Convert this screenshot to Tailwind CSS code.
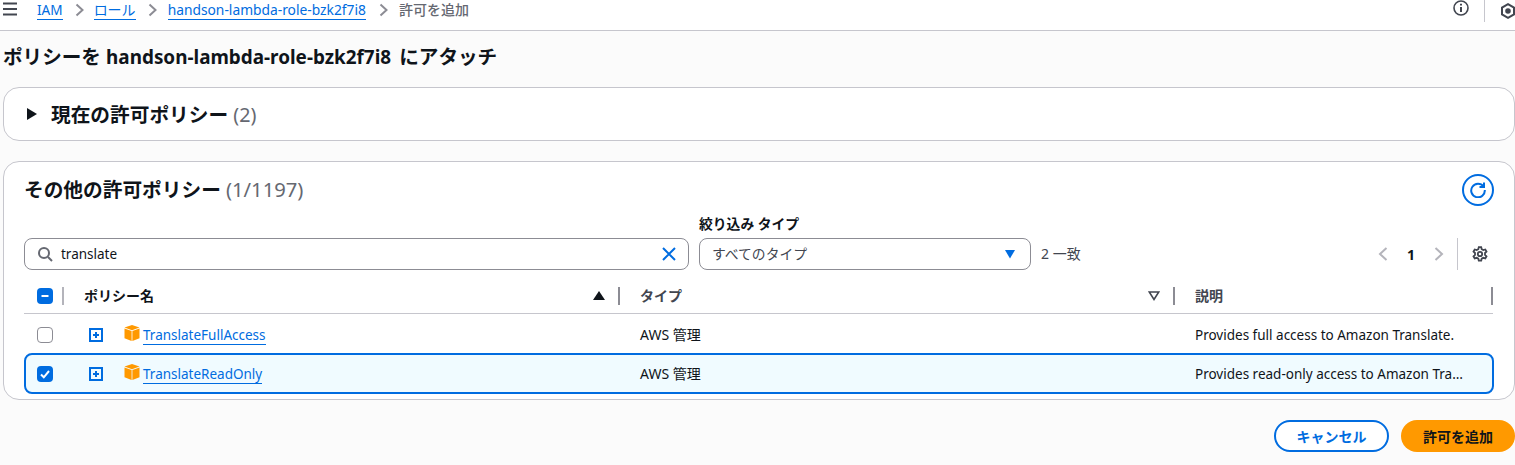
<!DOCTYPE html>
<html lang="ja">
<head>
  <meta charset="UTF-8">
  <title>許可を追加</title>
  <script src="https://cdn.jsdelivr.net/npm/@tailwindcss/browser@4"></script>
</head>
<body class="bg-[#fbfbfb] text-[#0f141a] font-['Noto_Sans','Noto_Sans_CJK_JP',sans-serif] w-[1515px] h-[465px] overflow-hidden">
  <!-- top bar -->
  <div class="h-[31px] bg-white border-b border-[#c6c6cd] flex items-start">
    <svg class="w-4 h-4 ml-[2px] mt-[1px]" viewBox="0 0 16 16" fill="none" stroke="#424650" stroke-width="2"><path d="M1 2.500h14M1 8h14M1 13.500h14"/></svg>
    <nav class="flex items-center ml-[19px] text-[14px] leading-[20px] h-[20px]">
      <a class="text-[#006ce0] border-b border-[#006ce0] leading-[18px] text-[13.600px]">IAM</a>
      <svg class="w-4 h-4 ml-[9px] mr-[6px]" viewBox="0 0 16 16" fill="none" stroke="#8c8c94" stroke-width="2"><path d="M4.500 2.500l6 5.500-6 5.500"/></svg>
      <a class="text-[#006ce0] border-b border-[#006ce0] leading-[18px]">ロール</a>
      <svg class="w-4 h-4 ml-[9px] mr-[7px]" viewBox="0 0 16 16" fill="none" stroke="#8c8c94" stroke-width="2"><path d="M4.500 2.500l6 5.500-6 5.500"/></svg>
      <a class="text-[#006ce0] border-b border-[#006ce0] leading-[18px] text-[13.800px]">handson-lambda-role-bzk2f7i8</a>
      <svg class="w-4 h-4 ml-[10px] mr-[7px]" viewBox="0 0 16 16" fill="none" stroke="#8c8c94" stroke-width="2"><path d="M4.500 2.500l6 5.500-6 5.500"/></svg>
      <span class="text-[#656871] font-medium">許可を追加</span>
    </nav>
    <div class="ml-auto -mr-[1px] flex items-start">
      <svg class="w-4 h-4" viewBox="0 0 16 16" fill="none" stroke="#424650" stroke-width="1.600"><circle cx="8" cy="8" r="7"/><path d="M8 7v5M8 3.800v1.600" stroke-width="2"/></svg>
      <div class="w-px h-[22px] bg-[#c6c6cd] ml-[15px]"></div>
      <svg class="w-4 h-4 ml-[15px] mt-[3px] shrink-0" viewBox="0 0 16 16" fill="none" stroke="#424650" stroke-width="2"><path d="M8 1.200l6 3.400v6.800l-6 3.400-6-3.400V4.600z"/><circle cx="8" cy="8" r="1.800" fill="#424650"/></svg>
    </div>
  </div>

  <h1 class="ml-[3px] mt-[13px] text-[19.600px] leading-[26px] font-bold whitespace-nowrap">ポリシーを <span class="text-[18.900px] mr-[3px]">handson-lambda-role-bzk2f7i8</span> にアタッチ</h1>

  <!-- current policies -->
  <section class="ml-[3px] mt-[17px] h-[54px] bg-white border border-[#c6c6cd] rounded-2xl flex items-center pl-[23px]">
    <svg class="w-[10px] h-[12px]" viewBox="0 0 10 12" fill="#0f141a"><path d="M0 0l10 6-10 6z"/></svg>
    <h2 class="ml-[14px] mt-[2px] text-[19.700px] leading-[26px] font-bold">現在の許可ポリシー <span class="font-normal text-[#656871]">(2)</span></h2>
  </section>

  <!-- other policies -->
  <section class="ml-[3px] mt-[20px] h-[239px] bg-white border border-[#c6c6cd] rounded-2xl px-[20px]">
    <div class="flex justify-between pt-[13px] h-[52px]">
      <h2 class="text-[19.700px] leading-[28px] font-bold">その他の許可ポリシー <span class="font-normal text-[#656871] text-[20.200px]">(1/1197)</span></h2>
      <button class="w-8 h-8 -mt-[1px] rounded-full border-2 border-[#006ce0] flex items-center justify-center">
        <svg class="w-4 h-4" viewBox="0 0 16 16" fill="none" stroke="#006ce0" stroke-width="2"><path d="M13.500 4.500A6.800 6.800 0 1 0 14.800 8"/><path d="M14 .5V5H9.500"/></svg>
      </button>
    </div>

    <div class="h-[24px] ml-[675px] text-[13.800px] leading-[20px] font-bold">絞り込み タイプ</div>

    <div class="flex items-center h-[32px]">
      <div class="w-[665px] h-[32px] border border-[#8c8c94] rounded-lg flex items-center pl-[12px] pr-[11px]">
        <svg class="w-4 h-4" viewBox="0 0 16 16" fill="none" stroke="#656871" stroke-width="2"><circle cx="7" cy="7" r="5"/><path d="M11 11l4 4"/></svg>
        <span class="ml-[8px] text-[13.500px] leading-[20px]">translate</span>
        <svg class="w-4 h-4 ml-auto" viewBox="0 0 16 16" fill="none" stroke="#006ce0" stroke-width="2"><path d="M2 2l12 12M14 2L2 14"/></svg>
      </div>
      <div class="w-[332px] h-[32px] ml-[10px] border border-[#8c8c94] rounded-lg flex items-center pl-[12px] pr-[14px]">
        <span class="text-[13.800px] leading-[20px] text-[#424650]">すべてのタイプ</span>
        <svg class="w-[12px] h-[9px] ml-auto" viewBox="0 0 12 9" fill="#006ce0"><path d="M1 0h10L6 8.500z"/></svg>
      </div>
      <span class="ml-[10px] text-[14px] leading-[20px] text-[#424650]">2 一致</span>
      <div class="ml-auto flex items-center mr-[6px] h-[32px]">
        <svg class="w-4 h-4" viewBox="0 0 16 16" fill="none" stroke="#b4b4bb" stroke-width="2"><path d="M11.500 2L5 8l6.500 6"/></svg>
        <span class="ml-[16px] text-[14px] font-bold w-[8px] text-center">1</span>
        <svg class="w-4 h-4 ml-[16px]" viewBox="0 0 16 16" fill="none" stroke="#b4b4bb" stroke-width="2"><path d="M4.500 2l6.500 6-6.500 6"/></svg>
        <div class="w-px h-[32px] bg-[#c6c6cd] ml-[10px]"></div>
        <svg class="w-4 h-4 ml-[14px]" viewBox="0 0 16 16" fill="none" stroke="#424650" stroke-width="1.800"><circle cx="8" cy="8" r="2.200"/><path d="M6.800 1.200h2.400l.5 2 1.600.9 2-.6 1.200 2.100-1.500 1.400v1.900l1.500 1.400-1.200 2.100-2-.6-1.600.9-.5 2H6.800l-.5-2-1.600-.9-2 .6-1.200-2.100 1.500-1.400V7l-1.500-1.400 1.200-2.100 2 .6 1.600-.9z"/></svg>
      </div>
    </div>

    <!-- table header -->
    <div class="mt-[11px] h-[33px] w-[1469px] border-b border-[#c6c6cd] flex items-start pt-[6px] text-[14px] leading-[20px] font-bold text-[#424650]">
      <div class="w-[38px] flex shrink-0 pl-[13px]">
        <span class="mt-[1px] w-4 h-4 rounded-[4px] bg-[#006ce0] flex items-center justify-center">
          <svg class="w-3 h-3" viewBox="0 0 12 12" stroke="white" stroke-width="2"><path d="M2.500 6h7"/></svg>
        </span>
      </div>
      <div class="w-[556px] h-[18px] flex shrink-0 border-l-2 border-[#b4b4bb] pl-[20px] pr-[13px] justify-between items-center">
        <span class="text-[#0f141a]">ポリシー名</span>
        <svg class="w-[12px] h-[10px]" viewBox="0 0 12 10" fill="#0f141a"><path d="M6 0l6 9H0z"/></svg>
      </div>
      <div class="w-[555px] h-[18px] flex shrink-0 border-l-2 border-[#8c8c94] pl-[20px] pr-[13px] justify-between items-center">
        <span>タイプ</span>
        <svg class="w-[12px] h-[10px]" viewBox="0 0 12 10" fill="none" stroke="#424650" stroke-width="1.600"><path d="M1.200 1h9.600L6 8.500z"/></svg>
      </div>
      <div class="grow h-[18px] flex border-x-2 border-x-[#8c8c94] pl-[20px] items-center">
        <span>説明</span>
      </div>
    </div>

    <!-- rows -->
    <div class="h-[39px] w-[1470px] pt-[2px] flex items-center text-[13.500px] leading-[20px]">
      <div class="w-[39px] pl-[13px] shrink-0"><span class="block w-4 h-4 rounded-[4px] border border-[#8c8c94] bg-white"></span></div>
      <div class="w-[556px] shrink-0 flex items-center pl-[26px]">
        <svg class="w-[14px] h-[14px] shrink-0" viewBox="0 0 14 14" fill="none" stroke="#006ce0" stroke-width="2"><rect x="1" y="1" width="12" height="12"/><path d="M4 7h6M7 4v6"/></svg>
        <svg class="w-[16px] h-[16px] ml-[21px] -mt-[4px] shrink-0" viewBox="0 0 16 16"><path d="M8 0l7.500 2.600L8 5.200.5 2.600z" fill="#f90"/><path d="M.5 3.400L7.600 6V16L.5 13.200z" fill="#f90"/><path d="M15.500 3.400L8.400 6V16l7.100-2.800z" fill="#f90"/></svg>
        <a class="ml-[3px] mt-[2px] text-[#006ce0] border-b border-[#006ce0] leading-[18px]">TranslateFullAccess</a>
      </div>
      <div class="w-[555px] shrink-0 pl-[21px] text-[14px]">AWS 管理</div>
      <div class="pl-[21px] whitespace-nowrap">Provides full access to Amazon Translate.</div>
    </div>
    <div class="h-[41px] w-[1470px] flex items-center text-[13.500px] leading-[20px] border-2 border-[#006ce0] rounded-lg bg-[#f0fbff]">
      <div class="w-[37px] pl-[11px] shrink-0">
        <span class="w-4 h-4 rounded-[4px] bg-[#006ce0] flex items-center justify-center">
          <svg class="w-3 h-3" viewBox="0 0 12 12" fill="none" stroke="white" stroke-width="2"><path d="M2 6.500l2.800 2.800L10 3"/></svg>
        </span>
      </div>
      <div class="w-[556px] shrink-0 flex items-center pl-[26px]">
        <svg class="w-[14px] h-[14px] shrink-0" viewBox="0 0 14 14" fill="none" stroke="#006ce0" stroke-width="2"><rect x="1" y="1" width="12" height="12"/><path d="M4 7h6M7 4v6"/></svg>
        <svg class="w-[16px] h-[16px] ml-[21px] -mt-[4px] shrink-0" viewBox="0 0 16 16"><path d="M8 0l7.500 2.600L8 5.200.5 2.600z" fill="#f90"/><path d="M.5 3.400L7.600 6V16L.5 13.200z" fill="#f90"/><path d="M15.500 3.400L8.400 6V16l7.100-2.800z" fill="#f90"/></svg>
        <a class="ml-[3px] mt-[2px] text-[#006ce0] border-b border-[#006ce0] leading-[18px]">TranslateReadOnly</a>
      </div>
      <div class="w-[555px] shrink-0 pl-[21px] text-[14px]">AWS 管理</div>
      <div class="pl-[21px] whitespace-nowrap">Provides read-only access to Amazon Tra…</div>
    </div>
  </section>

  <!-- footer -->
  <div class="flex justify-end mt-[20px] gap-[12px]">
    <button class="w-[115px] h-[32px] rounded-full border-2 border-[#006ce0] text-[#006ce0] bg-white text-[14px] font-bold">キャンセル</button>
    <button class="w-[114px] h-[32px] rounded-full bg-[#ff9900] text-[#0f141a] text-[14px] font-bold">許可を追加</button>
  </div>
</body>
</html>
